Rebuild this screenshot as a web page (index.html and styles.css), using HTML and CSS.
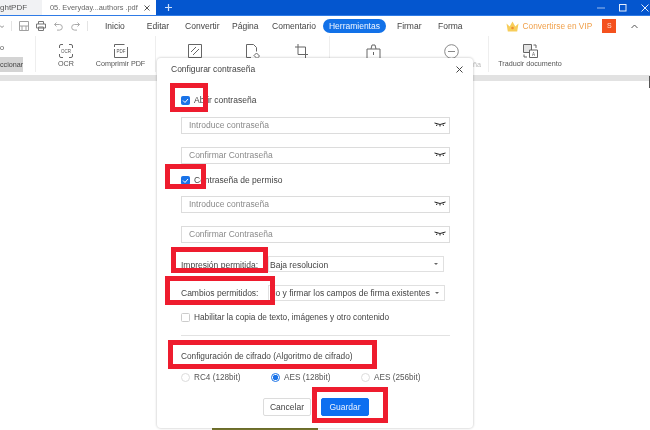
FILE: index.html
```html
<!DOCTYPE html>
<html lang="es">
<head>
<meta charset="utf-8">
<title>Configurar contraseña</title>
<link rel="stylesheet" href="styles.css">
</head>
<body>
<div class="page">
  <div class="tabbar">
    <div class="tab-app"><span class="tab-app-name">ghtPDF</span></div>
    <div class="tab-active"><span>05. Everyday...authors .pdf</span>
      <svg class="tab-x" width="6" height="6" viewBox="0 0 6 6"><path d="M.5.5l5 5M5.500.5l-5 5" stroke="#555" fill="none"/></svg>
    </div>
    <svg class="tab-plus" width="7" height="7" viewBox="0 0 7 7"><path d="M3.500 0v7M0 3.500h7" stroke="#cfe0fa" stroke-width="1.200" fill="none"/></svg>
    <div class="win-controls">
      <svg width="8" height="8" viewBox="0 0 8 8"><path d="M0 4h8" stroke="#9dbcec" fill="none"/></svg>
      <svg width="8" height="8" viewBox="0 0 8 8"><rect x=".5" y=".5" width="6.500" height="6.500" stroke="#e6eefb" fill="none"/></svg>
      <svg width="8" height="8" viewBox="0 0 8 8"><path d="M.5.5l7 7M7.500.5l-7 7" stroke="#e6eefb" fill="none"/></svg>
    </div>
  </div>

  <div class="menubar">
    <div class="quick">
      <svg class="q-drop" width="4" height="3" viewBox="0 0 4 3"><path d="M0 .5l2 2 2-2" stroke="#888" fill="none"/></svg>
      <i class="q-sep q-sep-a"></i>
      <svg class="q-save" width="10" height="10" viewBox="0 0 10 10"><path d="M.5.5h9v9h-9zM.5 5h9M3 5v4.500h4V5" stroke="#a0a0a0" fill="none"/></svg>
      <svg class="q-print" width="10" height="10" viewBox="0 0 10 10"><path d="M2.500 3V.5h5V3M.5 3h9v4H.5zM2.500 6h5v3.500h-5z" stroke="#777" fill="none"/></svg>
      <svg class="q-undo" width="9" height="9" viewBox="0 0 9 9"><path d="M2.500.5L.5 2.500l2 2M.5 2.500h5a2.800 2.800 0 0 1 0 5.600H3" stroke="#aaa" fill="none"/></svg>
      <svg class="q-redo" width="9" height="9" viewBox="0 0 9 9"><path d="M6.500.5l2 2-2 2M8.500 2.500h-5a2.800 2.800 0 0 0 0 5.600H6" stroke="#aaa" fill="none"/></svg>
      <i class="q-sep q-sep-b"></i>
    </div>
    <nav class="menu">
      <span class="menu-inicio">Inicio</span>
      <span class="menu-editar">Editar</span>
      <span class="menu-convertir">Convertir</span>
      <span class="menu-pagina">Página</span>
      <span class="menu-comentario">Comentario</span>
      <span class="menu-pill">Herramientas</span>
      <span class="menu-firmar">Firmar</span>
      <span class="menu-forma">Forma</span>
    </nav>
    <div class="vip">
      <svg width="13" height="11" viewBox="0 0 13 11"><path d="M.5 2.500l3.200 3L6.500.5l2.800 5 3.200-3-1.300 8H1.800z" fill="#f7cd5a"/><circle cx="6.500" cy="7" r="1.300" fill="#ee8f2e"/></svg>
      <span>Convertirse en VIP</span>
    </div>
    <div class="avatar">S</div>
    <svg class="collapse" width="7" height="5" viewBox="0 0 7 5"><path d="M.5 4l3-3 3 3" stroke="#555" fill="none"/></svg>
  </div>

  <div class="ribbon">
    <div class="rib-select"><span class="rib-o">o</span><span class="rib-sel">ccionar</span></div>
    <div class="rib-item rib-ocr">
      <svg width="14" height="14" viewBox="0 0 14 14"><path d="M.5 4V2Q.5.5 2 .5h2M10 .5h2q1.500 0 1.500 1.500v2M13.500 10v2q0 1.500-1.500 1.500h-2M4 13.500H2Q.5 13.500.5 12v-2" stroke="#666" fill="none"/><text x="7" y="8.800" class="ico-text">OCR</text></svg>
      <span>OCR</span>
    </div>
    <div class="rib-item rib-comp">
      <svg width="14" height="14" viewBox="0 0 14 14"><path d="M.5 3V.5h10M13.500 3v10.500H.5V5" stroke="#666" fill="none"/><text x="7" y="9.200" class="ico-text">PDF</text></svg>
      <span>Comprimir PDF</span>
    </div>
    <div class="rib-sep rib-sep-c"></div>
    <div class="rib-icon rib-a">
      <svg width="14" height="14" viewBox="0 0 14 14"><path d="M.5.5h13v13H.5zM3 8l5-5M5 11l6-6" stroke="#666" fill="none"/></svg>
    </div>
    <div class="rib-icon rib-b">
      <svg width="15" height="15" viewBox="0 0 15 15"><path d="M6 13.500H1.500V.5h7l3 3v4M9 11.500l2.500-2.500 3 3-2.500 2.500z" stroke="#666" fill="none"/></svg>
    </div>
    <div class="rib-icon rib-c">
      <svg width="13" height="14" viewBox="0 0 13 14"><path d="M3 0v10.500h10M0 3h10.500v11" stroke="#666" fill="none"/></svg>
    </div>
    <div class="rib-sep rib-sep-a"></div>
    <div class="rib-icon rib-d">
      <svg width="15" height="15" viewBox="0 0 15 15"><path d="M1 5h13v10H1zM5 5l1-4h3l1 4M7.500 8v3" stroke="#666" fill="none"/></svg>
    </div>
    <div class="rib-icon rib-e">
      <svg width="15" height="15" viewBox="0 0 15 15"><circle cx="7.500" cy="7.500" r="6.800" stroke="#888" fill="none"/><path d="M4 7.500h7" stroke="#888"/></svg>
    </div>
    <span class="rib-frag">ña</span>
    <div class="rib-sep rib-sep-b"></div>
    <div class="rib-item rib-trans">
      <svg width="15" height="14" viewBox="0 0 15 14"><path d="M.5.500h8v8h-8z" stroke="#666" fill="#e4e4e4"/><path d="M6.500 6h8v7.500h-8z" stroke="#666" fill="#fff"/><text x="10.500" y="12" class="ico-text">A</text><path d="M10.500 1h2.500v3M1 10.500V13h3" stroke="#666" fill="none"/></svg>
      <span>Traducir documento</span>
    </div>
  </div>

  <div class="strip"><i class="scroll-mark"></i></div>
  <div class="canvas"><div class="olive"></div></div>

  <section class="dialog">
    <header class="dlg-head">
      <h1>Configurar contraseña</h1>
      <svg width="7" height="7" viewBox="0 0 7 7"><path d="M.5.5l6 6M6.500.5l-6 6" stroke="#444" fill="none"/></svg>
    </header>
    <div class="body">
      <label class="check first"><i class="box on"><svg width="9" height="9" viewBox="0 0 9 9"><path d="M2 4.500l2 2 3-3.500" stroke="#fff" fill="none"/></svg></i>Abrir contraseña</label>
      <div class="field f1">Introduce contraseña<svg class="eye" width="12" height="5" viewBox="0 0 12 5"><path d="M.5 1Q6 4 11.500 1M3 2.500L2.500 4M6 3v1.500M9 2.500L9.500 4" stroke="#222" fill="none"/></svg></div>
      <div class="field f2">Confirmar Contraseña<svg class="eye" width="12" height="5" viewBox="0 0 12 5"><path d="M.5 1Q6 4 11.500 1M3 2.500L2.500 4M6 3v1.500M9 2.500L9.500 4" stroke="#222" fill="none"/></svg></div>
      <label class="check second"><i class="box on"><svg width="9" height="9" viewBox="0 0 9 9"><path d="M2 4.500l2 2 3-3.500" stroke="#fff" fill="none"/></svg></i>Contraseña de permiso</label>
      <div class="field f3">Introduce contraseña<svg class="eye" width="12" height="5" viewBox="0 0 12 5"><path d="M.5 1Q6 4 11.500 1M3 2.500L2.500 4M6 3v1.500M9 2.500L9.500 4" stroke="#222" fill="none"/></svg></div>
      <div class="field f2">Confirmar Contraseña<svg class="eye" width="12" height="5" viewBox="0 0 12 5"><path d="M.5 1Q6 4 11.500 1M3 2.500L2.500 4M6 3v1.500M9 2.500L9.500 4" stroke="#222" fill="none"/></svg></div>
      <div class="sel-row r1"><span class="sel-label">Impresión permitida:</span><div class="select"><span class="sel-val">Baja resolucion</span><i class="caret"></i></div></div>
      <div class="sel-row r2"><span class="sel-label">Cambios permitidos:</span><div class="select sel-wide"><span class="sel-val">rio y firmar los campos de firma existentes</span><i class="caret"></i></div></div>
      <label class="check third"><i class="box"></i>Habilitar la copia de texto, imágenes y otro contenido</label>
      <hr class="divider">
      <div class="cipher">Configuración de cifrado (Algoritmo de cifrado)</div>
      <div class="radios">
        <label class="radio rc4"><i class="dot"></i>RC4 (128bit)</label>
        <label class="radio aes1"><i class="dot on"></i>AES (128bit)</label>
        <label class="radio"><i class="dot"></i>AES (256bit)</label>
      </div>
      <div class="actions">
        <button class="btn">Cancelar</button>
        <button class="btn primary">Guardar</button>
      </div>
    </div>
  </section>

  <div class="mark m1"></div>
  <div class="mark m2"></div>
  <div class="mark m3"></div>
  <div class="mark m4"></div>
  <div class="mark m5"></div>
  <div class="mark m6"></div>
</div>
</body>
</html>
```
FILE: styles.css
```css
* { box-sizing: border-box; }
html, body { margin: 0; padding: 0; }
body { width: 650px; height: 430px; overflow: hidden; background: #fff; font-family: "Liberation Sans", Arial, sans-serif; font-size: 8.5px; color: #444; }
.page { position: relative; width: 650px; height: 430px; display: flex; flex-direction: column; overflow: hidden; filter: blur(0.3px); }

.tabbar { height: 16px; flex: none; background: #0456cf; display: flex; align-items: center; border-bottom: 1px solid #2f7be6; }
.tab-app { width: 42px; height: 15px; background: #f1f2f4; display: flex; align-items: center; font-size: 8px; color: #555; }
.tab-app-name { white-space: nowrap; }
.tab-active { width: 114px; height: 15px; background: #fff; display: flex; align-items: center; padding-left: 8px; font-size: 7.4px; color: #666; white-space: nowrap; }
.tab-x { margin-left: 6px; }
.tab-plus { margin-left: 9px; }
.win-controls { margin-left: auto; display: flex; gap: 14px; padding-right: 1px; }

.menubar { height: 20px; flex: none; display: flex; align-items: center; background: #fff; }
.quick { display: flex; align-items: center; width: 105px; flex: none; }
.q-drop { margin-left: 0; }
.q-sep { width: 1px; height: 10px; background: #e4e4e4; flex: none; }
.q-sep-a { margin-left: 7px; }
.q-save { margin-left: 7px; }
.q-print { margin-left: 7px; }
.q-undo { margin-left: 8px; }
.q-redo { margin-left: 8px; }
.q-sep-b { margin-left: 7px; }
.menu { display: flex; align-items: center; font-size: 8.5px; color: #444; white-space: nowrap; }
.menu-editar { margin-left: 22px; }
.menu-convertir { margin-left: 16px; }
.menu-pagina { margin-left: 12.500px; }
.menu-comentario { margin-left: 13.500px; }
.menu-pill { margin-left: 7px; width: 63px; height: 14px; line-height: 14px; text-align: center; background: #1271e8; color: #f2f7ff; border-radius: 7px; }
.menu-firmar { margin-left: 11px; }
.menu-forma { margin-left: 16.500px; }
.vip { display: flex; align-items: center; gap: 4px; margin-left: 43px; color: #f0a04a; font-size: 8.300px; white-space: nowrap; }
.avatar { margin-left: 10px; width: 14px; height: 14px; background: #f4511e; color: #fde0d4; font-size: 7px; line-height: 14px; text-align: center; }
.collapse { margin-left: 15px; }

.ribbon { height: 39px; flex: none; display: flex; align-items: flex-start; background: #fff; }
.rib-select { width: 36px; height: 36px; flex: none; border-right: 1px solid #eee; font-size: 7.200px; color: #555; display: flex; flex-direction: column; align-items: flex-start; }
.rib-o { margin-top: 6px; height: 15px; line-height: 12px; }
.rib-sel { width: 23px; height: 15px; line-height: 15px; background: #d4d4d4; color: #444; white-space: nowrap; overflow: visible; }
.rib-item { display: flex; flex-direction: column; align-items: center; gap: 1px; font-size: 7.200px; line-height: 9px; color: #555; white-space: nowrap; padding-top: 8px; flex: none; }
.rib-ocr { width: 60px; }
.rib-comp { width: 49px; }
.rib-icon { padding-top: 8px; display: flex; justify-content: center; flex: none; }
.rib-a { margin-left: 32px; width: 14px; }
.rib-b { margin-left: 43px; width: 15px; }
.rib-c { margin-left: 35px; width: 13px; }
.rib-sep { width: 1px; height: 36px; background: #eee; flex: none; }
.rib-sep-c { margin-left: 10px; }
.rib-sep-a { margin-left: 20.500px; }
.rib-d { margin-left: 36.500px; width: 15px; }
.rib-e { margin-left: 63px; width: 15px; }
.rib-frag { margin-left: 14px; margin-top: 24px; font-size: 7.200px; line-height: 9px; color: #bbb; }
.rib-sep-b { margin-left: 7px; }
.rib-trans { width: 82px; }
.ico-text { font-size: 4.500px; fill: #555; text-anchor: middle; font-family: "Liberation Sans", Arial, sans-serif; }

.strip { height: 6px; flex: none; background: #e2e2e2; position: relative; }
.scroll-mark { position: absolute; right: 0; top: 1px; width: 1px; height: 12px; background: #555; }
.canvas { flex: 1; display: flex; align-items: flex-end; padding-left: 212px; background: #fff; }
.olive { width: 106px; height: 2px; background: #76772f; }

.dialog { position: absolute; left: 157px; top: 58px; width: 316px; height: 370px; background: #fff; border-radius: 4px; box-shadow: 0 0 2px 1px rgba(0,0,0,.13); }
.dlg-head { display: flex; align-items: center; justify-content: space-between; padding: 0 10px 0 14px; height: 22px; }
.dlg-head h1 { margin: 0; font-size: 8.500px; font-weight: 400; color: #444; line-height: 11px; }
.body { padding: 0 23px 0 24px; }
.check { display: flex; align-items: center; gap: 4px; height: 10px; line-height: 10px; color: #444; white-space: nowrap; }
.check.first { margin-top: 15px; }
.check.second { margin-top: 11px; }
.check.third { margin-top: 11px; font-size: 8.300px; }
.box { width: 9px; height: 9px; flex: none; border: 1px solid #ccc; border-radius: 1.500px; display: flex; align-items: center; justify-content: center; }
.box.on { background: #1a73e8; border-color: #1a73e8; }
.box svg { flex: none; margin: -1px; }
.field { height: 17px; border: 1px solid #dcdcdc; padding: 0 3px 2px 7px; display: flex; align-items: center; justify-content: space-between; color: #8a8a8a; white-space: nowrap; }
.f1 { margin-top: 12px; }
.f2 { margin-top: 13px; }
.f3 { margin-top: 11px; }
.eye { flex: none; }
.sel-row { display: flex; align-items: center; height: 16px; margin-right: 6px; white-space: nowrap; }
.r1 { margin-top: 13px; }
.r2 { margin-top: 13px; }
.r1 .sel-label, .r1 .sel-val { padding-top: 1px; }
.sel-label { width: 87px; flex: none; color: #444; }
.select { flex: 1; min-width: 0; height: 16px; border: 1px solid #e0e0e0; padding: 0 14px 0 1px; display: flex; align-items: center; position: relative; color: #444; }
.sel-wide { justify-content: flex-end; margin-right: -1px; }
.sel-val { white-space: nowrap; flex: none; }
.caret { position: absolute; right: 5px; top: 6px; width: 0; height: 0; border: 2px solid transparent; border-top: 2.500px solid #666; border-bottom: 0; }
.divider { margin: 13px 0 0; border: 0; border-top: 1px solid #e2e2e2; }
.cipher { margin-top: 15px; line-height: 10px; font-size: 8.300px; color: #444; white-space: nowrap; }
.radios { display: flex; margin-top: 11px; height: 10px; align-items: center; white-space: nowrap; font-size: 8.200px; }
.radio { display: flex; align-items: center; gap: 4px; color: #555; }
.rc4 { width: 90px; }
.aes1 { width: 90px; }
.dot { width: 9px; height: 9px; flex: none; border: 1px solid #dcdcdc; border-radius: 50%; background: #fff; }
.dot.on { border-color: #1a73e8; background: radial-gradient(circle, #1a73e8 0 2.500px, #fff 3px); }
.actions { display: flex; justify-content: flex-start; gap: 10px; margin-top: 16px; padding-left: 82px; }
.btn { width: 48px; height: 18px; padding: 0; border: 1px solid #dcdcdc; border-radius: 2px; background: #fff; font: inherit; color: #444; }
.btn.primary { background: #0d6ff0; border-color: #0d6ff0; color: #eaf2ff; }

.mark { position: absolute; border: 5px solid #ee1c2e; }
.m1 { left: 170px; top: 83px; width: 38px; height: 29px; }
.m2 { left: 165px; top: 164px; width: 41px; height: 25px; }
.m3 { left: 171px; top: 247px; width: 97px; height: 26px; }
.m4 { left: 165px; top: 276px; width: 110px; height: 29px; }
.m5 { left: 168px; top: 340px; width: 209px; height: 29px; }
.m6 { left: 312px; top: 387px; width: 76px; height: 36px; }
```
